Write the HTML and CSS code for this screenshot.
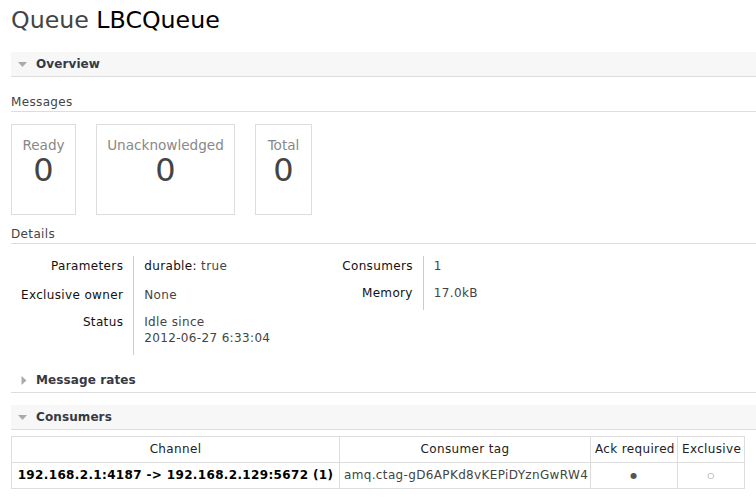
FILE: index.html
```html
<!DOCTYPE html>
<html>
<head>
<meta charset="utf-8">
<title>Queue LBCQueue</title>
<link rel="stylesheet" href="styles.css">
</head>
<body>
<div class="page">
  <h1 class="title">Queue <b>LBCQueue</b></h1>

  <h2 class="sec-head open"><svg class="tri" width="9" height="9" viewBox="0 0 9 9"><polygon points="0,2 9,2 4.5,7"/></svg>Overview</h2>
  <h3 class="sub">Messages</h3>
  <div class="boxes">
    <div class="box box-ready"><div class="box-label">Ready</div><div class="box-num">0</div></div>
    <div class="box box-unack"><div class="box-label">Unacknowledged</div><div class="box-num">0</div></div>
    <div class="box box-total"><div class="box-label">Total</div><div class="box-num">0</div></div>
  </div>
  <h3 class="sub sub-details">Details</h3>
  <div class="facts-row">
    <table class="facts facts-a">
      <tr class="first"><th>Parameters</th><td><span class="key">durable:</span> true</td></tr>
      <tr><th>Exclusive owner</th><td>None</td></tr>
      <tr><th>Status</th><td>Idle since<br>2012-06-27 6:33:04</td></tr>
    </table>
    <table class="facts facts-b">
      <tr><th>Consumers</th><td>1</td></tr>
      <tr><th>Memory</th><td>17.0kB</td></tr>
    </table>
  </div>

  <h2 class="sec-head closed"><svg class="tri" width="9" height="9" viewBox="0 0 9 9"><polygon points="3.5,0 8.5,4.5 3.5,9"/></svg>Message rates</h2>

  <h2 class="sec-head open sec-consumers"><svg class="tri" width="9" height="9" viewBox="0 0 9 9"><polygon points="0,2 9,2 4.5,7"/></svg>Consumers</h2>
  <table class="list">
    <colgroup><col class="c1"><col class="c2"><col class="c3"><col class="c4"></colgroup>
    <tr><th>Channel</th><th>Consumer tag</th><th>Ack required</th><th>Exclusive</th></tr>
    <tr><td class="chan">192.168.2.1:4187 -&gt; 192.168.2.129:5672 (1)</td><td class="tag">amq.ctag-gD6APKd8vKEPiDYznGwRW4</td><td class="dot">&#9679;</td><td class="dot off">&#9675;</td></tr>
  </table>
</div>
</body>
</html>
```
FILE: styles.css
```css
html, body {
  margin: 0;
  padding: 0;
  background: #fff;
}
body {
  font-family: "DejaVu Sans", Verdana, sans-serif;
  font-size: 12px;
  letter-spacing: 0.35px;
  color: #444;
}
.page {
  padding: 0 0 0 11px;
}
.title {
  margin: 6px 0 18px;
  font-size: 23.7px;
  line-height: 28px;
  letter-spacing: 0;
  font-weight: normal;
  color: #444;
}
.title b {
  font-weight: normal;
  color: #000;
}
.sec-head {
  display: flex;
  align-items: center;
  height: 24px;
  margin: 0;
  padding-left: 7px;
  font-size: 12px;
  line-height: 24px;
  font-weight: bold;
  letter-spacing: 0.1px;
  color: #363944;
  border-bottom: 1px solid #ddd;
}
.sec-head.open {
  background: #f7f7f7;
}
.sec-head.closed {
  margin-top: 13px;
}
.sec-consumers {
  margin-top: 12px;
}
.tri {
  fill: #aaa;
  margin-right: 9px;
  flex: none;
}
.sub {
  margin: 18px 0 0;
  padding-bottom: 1px;
  font-size: 12px;
  line-height: 15px;
  font-weight: normal;
  color: #444;
  border-bottom: 1px solid #ddd;
}
.sub-details {
  margin-top: 12px;
}
.boxes {
  display: flex;
  gap: 20px;
  margin-top: 12px;
}
.box {
  box-sizing: border-box;
  height: 91px;
  padding: 12px 0 0;
  border: 1px solid #ddd;
  text-align: center;
  letter-spacing: 0;
}
.box-ready { width: 65px; }
.box-unack { width: 139px; }
.box-total { width: 57px; }
.box-label {
  font-size: 13.6px;
  line-height: 17px;
  color: #888;
}
.box-num {
  font-size: 32px;
  line-height: 32px;
  color: #444;
}
.facts-row {
  display: flex;
  align-items: flex-start;
  margin-top: 12px;
}
.facts {
  border-collapse: collapse;
}
.facts th, .facts td {
  padding: 2px 10px 9px;
  line-height: 16px;
  vertical-align: top;
  white-space: nowrap;
}
.facts th {
  text-align: right;
  font-weight: normal;
  color: #111;
}
.facts td {
  text-align: left;
  border-left: 1px solid #ccc;
  color: #444;
}
.facts tr.first th, .facts tr.first td {
  padding-bottom: 11px;
}
.facts-a th { width: 100px; }
.facts-a td { width: 128px; }
.facts-b { margin-left: 50px; }
.facts-b th { width: 68px; }
.key { color: #111; }
.list {
  margin-top: 6px;
  border-collapse: collapse;
  table-layout: fixed;
  width: 733px;
}
.list .c1 { width: 328px; }
.list .c2 { width: 251px; }
.list .c3 { width: 87px; }
.list .c4 { width: 67px; }
.list th, .list td {
  border: 1px solid #ddd;
  padding: 5px 4px;
  line-height: 15px;
  text-align: center;
  white-space: nowrap;
  overflow: hidden;
}
.list th {
  font-weight: normal;
  color: #222;
}
.list td.chan {
  font-weight: bold;
  color: #000;
}
.list td.tag {
  color: #444;
}
.list td.dot {
  font-size: 8px;
  color: #555;
}
.list td.dot.off {
  color: #777;
}
```
